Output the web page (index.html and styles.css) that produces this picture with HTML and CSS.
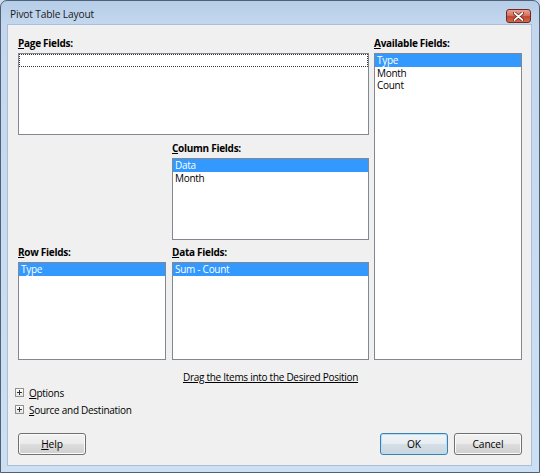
FILE: index.html
```html
<!DOCTYPE html>
<html>
<head>
<meta charset="utf-8">
<title>Pivot Table Layout</title>
<link rel="stylesheet" href="styles.css">
</head>
<body>
<div class="window">
  <div class="titlebar">
    <span class="title">Pivot Table Layout</span>
    <div class="close">
      <svg width="11" height="9" viewBox="0 0 11 9"><path d="M1.5 1 L9.5 8 M9.5 1 L1.5 8" stroke="#5a1a12" stroke-width="3.2" stroke-linecap="round"/><path d="M1.5 1 L9.5 8 M9.5 1 L1.5 8" stroke="#ffffff" stroke-width="1.7" stroke-linecap="round"/></svg>
    </div>
  </div>
  <div class="client">
    <div class="fields">
      <div class="lbl lbl-page"><u>P</u>age Fields:</div>
      <div class="lbl lbl-avail"><u>A</u>vailable Fields:</div>
      <div class="list list-page"><div class="item focus">&nbsp;</div></div>
      <div class="list list-avail">
        <div class="item sel">Type</div>
        <div class="item">Month</div>
        <div class="item">Count</div>
      </div>
      <div class="lbl lbl-col"><u>C</u>olumn Fields:</div>
      <div class="list list-col">
        <div class="item sel">Data</div>
        <div class="item">Month</div>
      </div>
      <div class="lbl lbl-row"><u>R</u>ow Fields:</div>
      <div class="lbl lbl-data"><u>D</u>ata Fields:</div>
      <div class="list list-row"><div class="item sel">Type</div></div>
      <div class="list list-data"><div class="item sel">Sum - Count</div></div>
    </div>
    <div class="hint-row"><span class="hint">Drag the Items into the Desired Position</span></div>
    <div class="expander"><span class="plus"></span><span><u>O</u>ptions</span></div>
    <div class="expander"><span class="plus"></span><span><u>S</u>ource and Destination</span></div>
    <div class="buttons">
      <button class="btn"><u>H</u>elp</button>
      <div class="spacer"></div>
      <button class="btn default">OK</button>
      <button class="btn">Cancel</button>
    </div>
  </div>
</div>
</body>
</html>
```

FILE: styles.css
```css
html, body {
  margin: 0;
  padding: 0;
  background: #c9dcf0;
}
body {
  font-family: "Open Sans", "Noto Sans", sans-serif;
  font-size: 10px;
  letter-spacing: -0.28px;
  color: #000;
}
.window {
  width: 540px;
  height: 473px;
  box-sizing: border-box;
  border: 1px solid #4e6177;
  border-radius: 7px 7px 0 0;
  background: linear-gradient(to bottom, #b6cde8 0px, #c4d7ee 24px, #cddff2 100%);
  display: flex;
  flex-direction: column;
  padding: 0 7px 6px 6px;
}
.titlebar {
  height: 23px;
  display: flex;
  align-items: center;
  justify-content: space-between;
}
.title {
  padding-left: 3px;
  font-size: 10.2px;
  letter-spacing: -0.15px;
  color: #1b1b1b;
  margin-top: 3px;
}
.close {
  width: 25px;
  height: 14px;
  align-self: flex-start;
  margin-top: 8px;
  margin-right: 1px;
  box-sizing: border-box;
  border: 1px solid #6b2b22;
  border-radius: 3px;
  background: linear-gradient(to bottom, #e8a294 0%, #d8715f 45%, #c24630 55%, #d26a4e 100%);
  display: flex;
  align-items: center;
  justify-content: center;
}
.close svg { display: block; }
.client {
  flex: 1;
  background: #f0f0f0;
  border: 1px solid #a9bfd8;
  padding: 11px 0 0 10px;
  display: flex;
  flex-direction: column;
}
.fields {
  display: grid;
  grid-template-columns: 149px 197px 148px;
  grid-template-rows: 17px 82px 23px 82px 22px 98px;
  column-gap: 5px;
}
.lbl {
  font-weight: bold;
  line-height: 14px;
  padding-bottom: 3px;
  align-self: end;
  white-space: nowrap;
}
.lbl-page { grid-column: 1 / 3; grid-row: 1; }
.lbl-avail { grid-column: 3; grid-row: 1; }
.lbl-col { grid-column: 2; grid-row: 3; }
.lbl-row { grid-column: 1; grid-row: 5; }
.lbl-data { grid-column: 2; grid-row: 5; }
.list {
  background: #fff;
  border: 1px solid #828790;
  box-sizing: border-box;
  padding: 0;
  overflow: hidden;
}
.list-page { grid-column: 1 / 3; grid-row: 2; }
.list-avail { grid-column: 3; grid-row: 2 / 7; }
.list-col { grid-column: 2; grid-row: 4; }
.list-row { grid-column: 1; grid-row: 6; width: 148px; }
.list-data { grid-column: 2; grid-row: 6; }
.item {
  height: 12.5px;
  line-height: 12.5px;
  padding-left: 2px;
  white-space: nowrap;
}
.item.sel {
  background: #3399ff;
  color: #fff;
}
.item.focus {
  outline: 1px dotted #333;
  outline-offset: -1px;
}
.hint-row {
  display: flex;
  padding-left: 154px;
  width: 197px;
  justify-content: center;
  margin-top: 10px;
  line-height: 14px;
}
.hint {
  text-decoration: underline;
  white-space: nowrap;
}
.expander {
  display: flex;
  align-items: center;
  height: 17px;
  margin-left: -3px;
  gap: 5px;
}
.expander:first-of-type { margin-top: 2px; }
.plus {
  width: 9px;
  height: 9px;
  box-sizing: border-box;
  border: 1px solid #919191;
  background: linear-gradient(#fdfdfd, #e6e6e6);
  position: relative;
}
.plus::before, .plus::after {
  content: "";
  position: absolute;
  background: #333;
}
.plus::before { left: 1px; right: 1px; top: 3px; height: 1px; }
.plus::after { top: 1px; bottom: 1px; left: 3px; width: 1px; }
.buttons {
  display: flex;
  margin-top: 15px;
  padding-right: 9px;
  gap: 6px;
}
.spacer { flex: 1; }
.btn {
  width: 68px;
  height: 22px;
  font-family: inherit;
  font-size: 10.2px;
  letter-spacing: -0.1px;
  color: #000;
  border: 1px solid #707070;
  border-radius: 3px;
  background: linear-gradient(to bottom, #f2f2f2 0%, #ebebeb 49%, #dddddd 51%, #cfcfcf 100%);
  box-shadow: inset 0 0 0 1px #fbfbfb;
  padding: 0;
}
.btn.default {
  border-color: #3c7fb1;
  box-shadow: inset 0 0 0 1px #b9dff5;
  background: linear-gradient(to bottom, #f0f4f7 0%, #e6edf2 49%, #d6dfe6 51%, #c9d4dd 100%);
}
```
